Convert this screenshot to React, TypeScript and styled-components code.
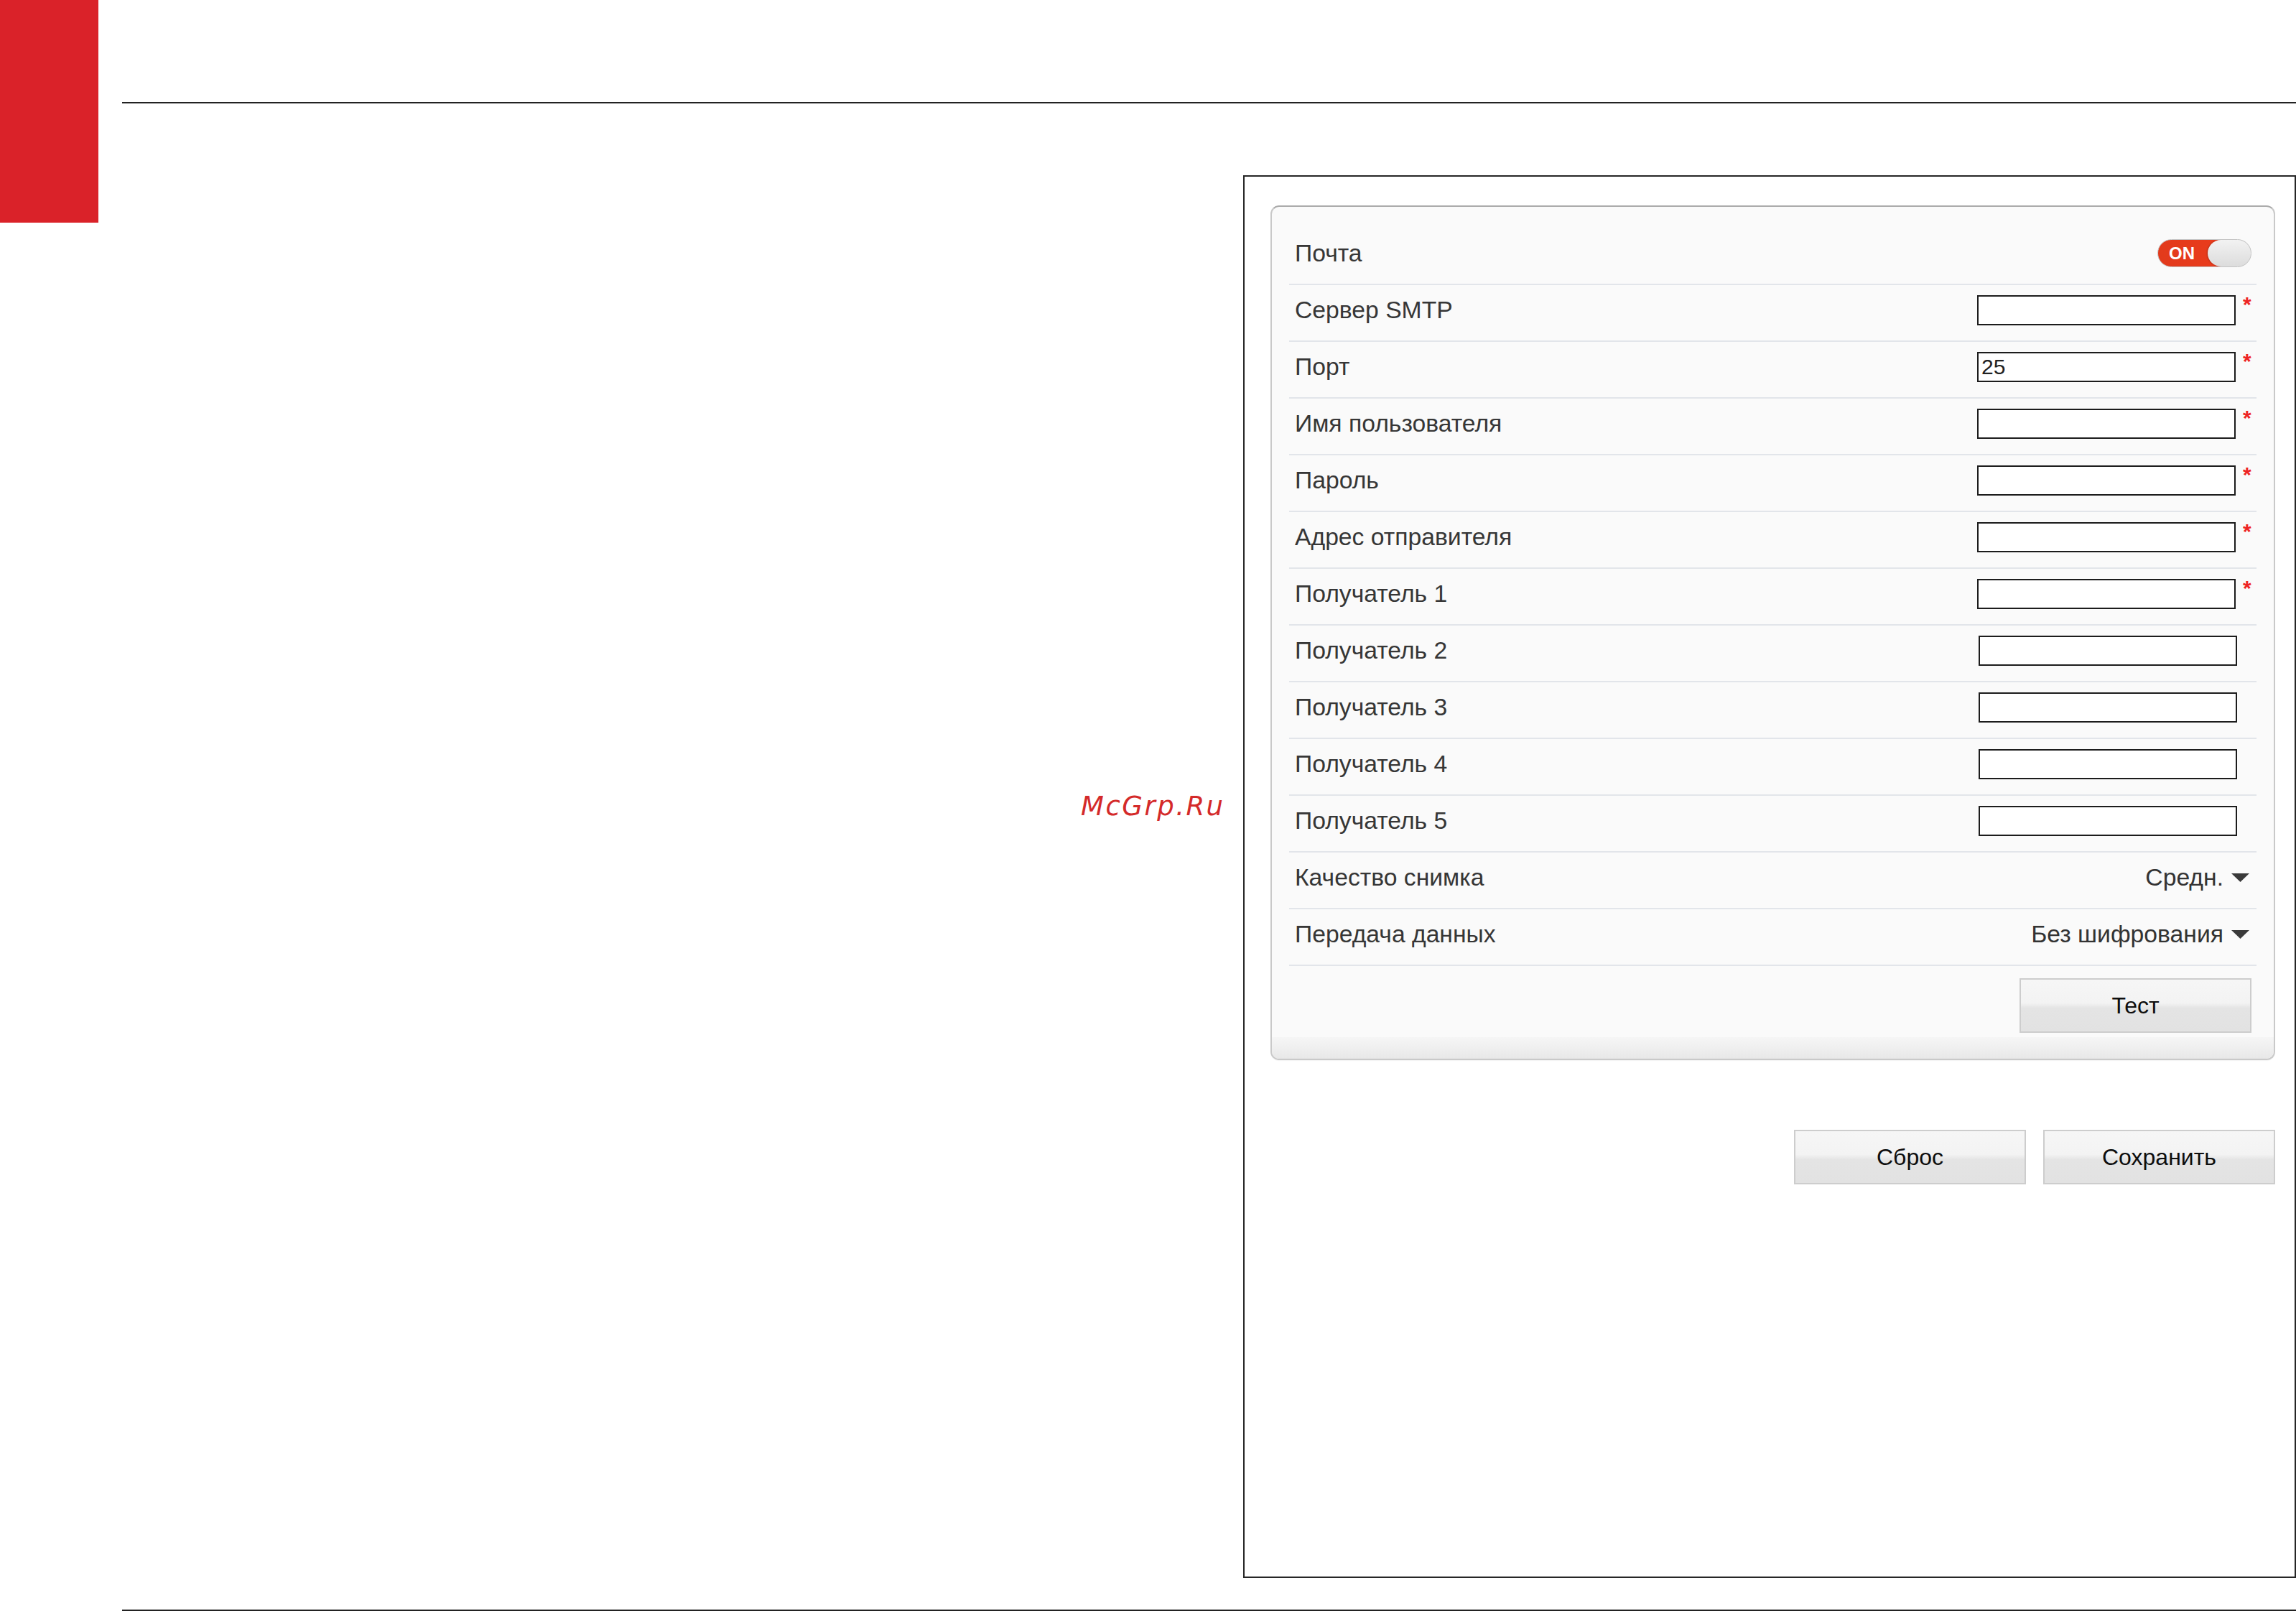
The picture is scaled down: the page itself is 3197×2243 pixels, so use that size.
import styled, { createGlobalStyle } from 'styled-components';

const GlobalStyle = createGlobalStyle`
  html, body {
    margin: 0;
    padding: 0;
    background: #ffffff;
  }
  body {
    width: 3197px;
    height: 2243px;
    overflow: hidden;
    font-family: 'Liberation Sans', Arial, sans-serif;
  }
  * {
    box-sizing: border-box;
  }
`;

interface FieldRow {
  label: string;
  kind: 'toggle' | 'input' | 'select';
  value?: string;
  required?: boolean;
}

const rows: FieldRow[] = [
  { label: 'Почта', kind: 'toggle' },
  { label: 'Сервер SMTP', kind: 'input', required: true },
  { label: 'Порт', kind: 'input', value: '25', required: true },
  { label: 'Имя пользователя', kind: 'input', required: true },
  { label: 'Пароль', kind: 'input', required: true },
  { label: 'Адрес отправителя', kind: 'input', required: true },
  { label: 'Получатель 1', kind: 'input', required: true },
  { label: 'Получатель 2', kind: 'input' },
  { label: 'Получатель 3', kind: 'input' },
  { label: 'Получатель 4', kind: 'input' },
  { label: 'Получатель 5', kind: 'input' },
  { label: 'Качество снимка', kind: 'select', value: 'Средн.' },
  { label: 'Передача данных', kind: 'select', value: 'Без шифрования' },
];

const Page = styled.div`
  position: relative;
  display: flex;
  width: 3197px;
  height: 2243px;
`;

const RedBar = styled.div`
  flex-shrink: 0;
  width: 137px;
  height: 310px;
  background: #da2229;
`;

const Main = styled.div`
  flex: 1;
  margin-left: 33px;
  display: flex;
  flex-direction: column;
`;

const Header = styled.div`
  height: 144px;
  border-bottom: 2px solid #222222;
`;

const Body = styled.div`
  flex: 1;
  display: flex;
  justify-content: flex-end;
  padding-top: 100px;
`;

const FooterRule = styled.div`
  margin-top: 43px;
  border-top: 2px solid #222222;
`;

const OuterPanel = styled.div`
  width: 1466px;
  height: 1953px;
  border: 2px solid #262626;
  padding: 40px 27px 0 36px;
  display: flex;
  flex-direction: column;
`;

const Card = styled.div`
  background: #fafafa;
  border: 2px solid #c9c9c9;
  border-top-color: #ababab;
  border-radius: 12px;
  overflow: hidden;
  box-shadow: 0 1px 1px rgba(0, 0, 0, 0.05);
`;

const RowList = styled.div`
  padding: 30px 24px 0;
`;

const Row = styled.div`
  height: 79px;
  display: flex;
  align-items: center;
  justify-content: space-between;
  padding: 0 7px 8px 8px;
  border-bottom: 2px solid #e2e5ea;
`;

const Label = styled.span`
  font-size: 33.7px;
  color: #363636;
  white-space: nowrap;
`;

const Control = styled.div`
  display: flex;
  align-items: flex-start;
`;

const TextInput = styled.input<{ $shift: number }>`
  width: 360px;
  height: 42px;
  margin-right: ${(p) => p.$shift}px;
  border: 2px solid #1c1c1c;
  background: #ffffff;
  padding: 0 4px;
  font-family: 'Liberation Sans', Arial, sans-serif;
  font-size: 30px;
  color: #222222;
  outline: none;
`;

const Required = styled.span`
  width: 12px;
  margin-left: 10px;
  margin-top: -2px;
  font-size: 30px;
  font-weight: bold;
  line-height: 1;
  color: #ee2424;
`;

const Toggle = styled.div`
  display: flex;
  align-items: stretch;
  width: 131px;
  height: 39px;
  border-radius: 20px;
  border: 1px solid #c4c4c4;
  overflow: hidden;
  background: linear-gradient(to right, #e23a1c 0, #ea3c1c 70%, #dcdcdc 70%);
`;

const ToggleOn = styled.span`
  flex: 1;
  display: flex;
  align-items: center;
  padding-left: 15px;
  font-size: 24px;
  font-weight: bold;
  color: #ffffff;
`;

const Knob = styled.span`
  width: 60px;
  border-radius: 20px;
  background: linear-gradient(#f2f2f2, #dcdcdc);
  box-shadow: -1px 0 2px rgba(0, 0, 0, 0.25);
`;

const Select = styled.div`
  display: flex;
  align-items: center;
  gap: 11px;
  padding-right: 3px;
  font-size: 33.7px;
  color: #333333;
`;

const ActionRow = styled.div`
  display: flex;
  justify-content: flex-end;
  padding: 17px 31px 6px 0;
`;

const Button = styled.button`
  width: 323px;
  height: 76px;
  border: 2px solid #cdcdcd;
  background: linear-gradient(#f6f6f6 0, #f3f3f3 45%, #e4e4e4 55%, #e2e2e2 100%);
  font-family: 'Liberation Sans', Arial, sans-serif;
  font-size: 32px;
  color: #0e0e0e;
  cursor: pointer;
`;

const CardFooter = styled.div`
  height: 30px;
  background: linear-gradient(#f6f6f6, #e8e8e8);
`;

const ButtonBar = styled.div`
  display: flex;
  justify-content: flex-end;
  gap: 24px;
  margin-top: 97px;
`;

const Watermark = styled.div`
  position: absolute;
  left: 1505px;
  top: 1104px;
  font-family: 'DejaVu Sans', sans-serif;
  font-style: italic;
  font-size: 37px;
  line-height: 1;
  letter-spacing: 2.5px;
  color: #d42a2a;
`;

const Caret = () => (
  <svg width="25" height="12" viewBox="0 0 25 12">
    <path d="M0 0 L25 0 L12.5 12 Z" fill="#3a3a3a" />
  </svg>
);

const renderControl = (row: FieldRow) => {
  if (row.kind === 'toggle') {
    return (
      <Toggle>
        <ToggleOn>ON</ToggleOn>
        <Knob />
      </Toggle>
    );
  }
  if (row.kind === 'select') {
    return (
      <Select>
        {row.value}
        <Caret />
      </Select>
    );
  }
  return (
    <Control>
      <TextInput
        $shift={row.required ? 0 : -2}
        defaultValue={row.value || ''}
      />
      {row.required ? <Required>*</Required> : <Required />}
    </Control>
  );
};

export default function App() {
  return (
    <>
      <GlobalStyle />
      <Page>
        <RedBar />
        <Main>
          <Header />
          <Body>
            <OuterPanel>
              <Card>
                <RowList>
                  {rows.map((row) => (
                    <Row key={row.label}>
                      <Label>{row.label}</Label>
                      {renderControl(row)}
                    </Row>
                  ))}
                </RowList>
                <ActionRow>
                  <Button>Тест</Button>
                </ActionRow>
                <CardFooter />
              </Card>
              <ButtonBar>
                <Button>Сброс</Button>
                <Button>Сохранить</Button>
              </ButtonBar>
            </OuterPanel>
          </Body>
          <FooterRule />
        </Main>
        <Watermark>McGrp.Ru</Watermark>
      </Page>
    </>
  );
}
